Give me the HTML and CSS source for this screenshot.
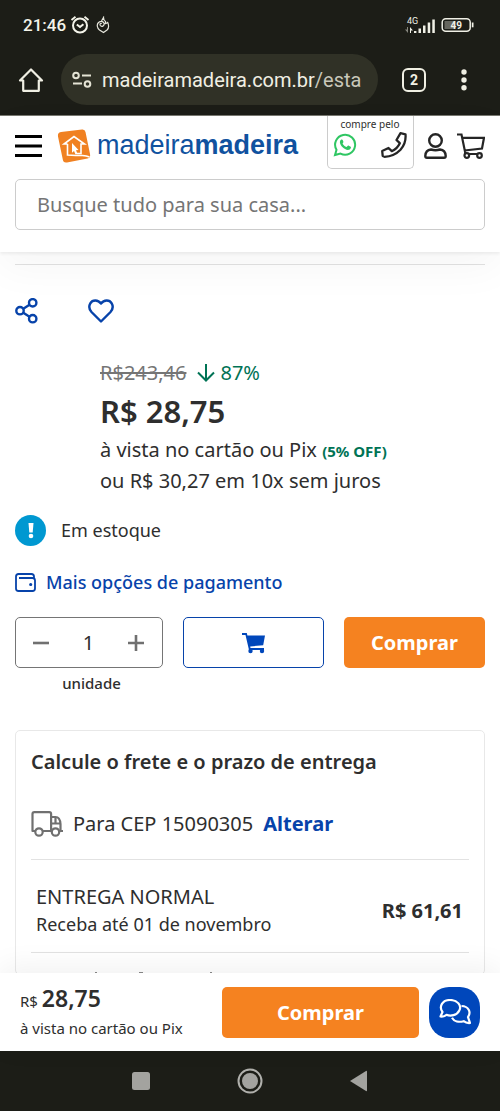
FILE: index.html
```html
<!DOCTYPE html>
<html lang="pt-BR">
<head>
<meta charset="utf-8">
<meta name="viewport" content="width=device-width, initial-scale=1">
<title>MadeiraMadeira</title>
<link rel="stylesheet" href="styles.css">
</head>
<body class="screen">
<div class="chrome">
  <div class="status">
    <div class="status-side">
      <span class="clock">21:46</span>
      <svg width="20" height="20" viewBox="0 0 20 20" fill="none" stroke="#f4f4ea" stroke-width="2"><circle cx="10" cy="10.500" r="7"/><path d="M1.500 5 5.500 1.800M18.500 5l-4-3.200" stroke-width="1.800"/><path d="m6.800 9.500 3.200 2.500 3.400-2.700"/></svg>
      <svg class="flame" width="14" height="18" viewBox="0 0 14 18" fill="none" stroke="#e6e6dc" stroke-width="1.200"><path d="M5.500 5 7.500 1.500c0 2 .5 3 2 4 .2.900 0 1.500-.3 2.200 1-.2 1.800-.7 2.500-1.300C13.300 10 13 12 11 14L7.500 16.500 3.500 14C1 12 .5 8.500 2.500 6.500q3.500-2.500 5.500.5c.8 3-2.500 4.500-3.800 2.300-.6-1.300.3-2.300 1.600-1.800"/></svg>
    </div>
    <div class="status-side">
      <svg width="32" height="18" viewBox="0 0 32 18" fill="#f0f0e6"><text x="2" y="8" class="net">4G</text><path d="M9 15h2.400v2H9zM13.500 12.500H16V17h-2.500zM18 9.500h2.500V17H18zM22.700 6.500h2.500V17h-2.500zM27.300 3.500h2.500V17h-2.500z"/><path d="M5 11l3 3.500H6V17H5z"/><path d="M3 17 0 13.500h2V11h1z" opacity=".5"/></svg>
      <svg width="33" height="16" viewBox="0 0 33 16"><rect x="1.200" y="1.700" width="28" height="12.600" rx="3.500" fill="none" stroke="#f0f0e6" stroke-width="1.500"/><path d="M3.500 4h11v8h-11z" fill="#66665e"/><path d="M30.800 5.500h1.700v4.800h-1.700z" fill="#f0f0e6"/><text x="9.500" y="12" class="bat">49</text></svg>
    </div>
  </div>
  <div class="browser">
    <button class="bare" aria-label="Início"><svg width="26" height="26" viewBox="0 0 26 26" fill="none" stroke="#f0efe3" stroke-width="2.200" stroke-linejoin="round"><path d="M2 13.500 13 2.500l11 11h-3.200v10.300H5.200V13.500z"/></svg></button>
    <div class="url">
      <svg width="20" height="18" viewBox="0 0 20 18" fill="none" stroke="#e4e3d4" stroke-width="2"><circle cx="4" cy="4.500" r="2.800"/><circle cx="15.500" cy="13" r="2.800"/><path d="M10 4.500h9M1 12.500h9"/></svg>
      <span>madeiramadeira.com.br<span class="path">/esta</span></span>
    </div>
    <button class="tabs">2</button>
    <button class="bare dots" aria-label="Mais"><svg width="6" height="22" viewBox="0 0 6 22" fill="#f0efe3"><circle cx="3" cy="3" r="2.700"/><circle cx="3" cy="11" r="2.700"/><circle cx="3" cy="18.700" r="2.700"/></svg></button>
  </div>
</div>

<header class="header">
  <div class="topline">
    <button class="bare" aria-label="Menu"><svg width="27" height="24" viewBox="0 0 27 24" fill="#000"><path d="M0 1h27v3H0zM0 10.500h27v3H0zM0 20h27v3H0z"/></svg></button>
    <a class="logo" href="#">
      <svg width="34" height="34" viewBox="0 0 34 34"><path d="M4 3 25 .5q3-.4 3.500 2.500L33 25q.8 4-2.500 4.500L10 33.500q-3.500.5-4-2L1 7.500Q.3 3.500 4 3Z" fill="#f08122"/><g fill="none" stroke="#fff" stroke-width="1.600"><path d="M10.500 15H7L17 7.500 27.500 15H24v9.500h-4.500M10.500 15v11q9 .5 15 .5 4 .2 7 1.500"/></g><path d="m15 14 6.500 7-2.500.2 1.500 3.500-2 .8-1.500-3.500-2 1.700z" fill="#fff"/></svg>
      <span class="brand">madeira<b>madeira</b></span>
    </a>
    <div class="contact">
      <span>compre pelo</span>
      <div class="contact-icons">
        <a href="#" aria-label="WhatsApp"><svg width="24" height="24" viewBox="0 0 24 24"><path d="M2 22l1.500-5.200A10 10 0 1 1 7.500 20.600z" fill="none" stroke="#2fc663" stroke-width="2"/><path d="M8.300 6.500c.8-.3 1.200 0 1.400.6l.7 1.700c.2.500-.4 1.100-.8 1.600.9 1.800 2.200 3 4 3.700l1.200-1.300c.3-.4.7-.3 1-.1l1.900 1c.4.200.3.500.2 1-.5 1.600-1.600 2.200-3 2.200-3.800-.3-7.600-4.200-8-7.400 0-1.400.6-2.600 1.400-3z" fill="#2fc663"/></svg></a>
        <a href="#" aria-label="Telefone"><svg width="26" height="26" viewBox="0 0 26 26" fill="none" stroke="#252525" stroke-width="2.300" stroke-linejoin="round"><path d="m19.500 1.200 5 1.200q.8 9-5 15.300-6.500 6.700-16 7.100L1.700 24l-.5-5 6.300-3 3.300 3.200q5.500-2.500 8-8L15.500 8z"/></svg></a>
      </div>
    </div>
    <a href="#" aria-label="Conta"><svg width="23" height="26" viewBox="0 0 23 26" fill="none" stroke="#252525" stroke-width="2.400"><circle cx="11.500" cy="7.500" r="6.300"/><path d="M7 16.500q4.500 1.500 9 0 5.500.5 5.700 6.500 0 1.700-1.700 1.700H3q-1.700 0-1.700-1.700.2-6 5.700-6.500z"/></svg></a>
    <a href="#" aria-label="Carrinho"><svg width="28" height="26" viewBox="0 0 28 26" fill="none" stroke="#252525" stroke-width="2.200"><path d="M0 1.500h4.500L8.500 21H25M5.300 4.800H27L25 15.500 7.500 17.500"/><circle cx="9.800" cy="22.500" r="2.300" fill="#fff"/><circle cx="22.500" cy="22.500" r="2.300" fill="#fff"/></svg></a>
  </div>
  <input class="search" type="search" aria-label="Busca" placeholder="Busque tudo para sua casa...">
</header>

<main class="content">
  <hr class="rule">
  <div class="actions">
    <button class="bare" aria-label="Compartilhar"><svg width="24" height="26" viewBox="0 0 24 26" fill="none" stroke="#0743aa" stroke-width="2.400"><circle cx="17.700" cy="4.800" r="3.700"/><circle cx="5" cy="12.700" r="3.700"/><circle cx="17.700" cy="20.700" r="3.700"/><path d="m8.300 10.700 6.200-4M8.300 14.700l6.200 4"/></svg></button>
    <button class="bare" aria-label="Favoritar"><svg width="26" height="24" viewBox="0 0 26 24" fill="none" stroke="#0743aa" stroke-width="2.400" stroke-linejoin="round"><path d="M13 4.500C10 .5 4.500.5 2.300 4.300.5 7.500 1.300 10.500 3.500 13L13 22.500 22.500 13c2.200-2.500 3-5.500 1.200-8.700C21.500.5 16 .5 13 4.500z"/></svg></button>
  </div>
  <section class="price">
    <p class="was"><s>R$243,46</s><svg width="18" height="18" viewBox="0 0 18 18" fill="none" stroke="#007355" stroke-width="2"><path d="M9 0v17M1 8.500l8 8 8-8"/></svg><span>87%</span></p>
    <p class="now">R$ 28,75</p>
    <p class="terms">à vista no cartão ou Pix <b>(5% OFF)</b></p>
    <p class="terms">ou R$ 30,27 em 10x sem juros</p>
  </section>
  <p class="stock"><span class="badge"><svg width="8" height="17" viewBox="0 0 8 17" fill="#fff"><path d="M1.500 1h5l-.8 9.500H2.300z"/><circle cx="4" cy="14" r="2.300"/></svg></span>Em estoque</p>
  <a class="more" href="#"><svg width="21" height="19" viewBox="0 0 21 19" fill="none" stroke="#0743aa" stroke-width="1.800"><path d="M19 5V3.500Q19 1 16.500 1h-13Q1 1 1 3.500v12Q1 18 3.500 18h14q2.500 0 2.500-2.500V7.500Q20 5 17.500 5H4"/><circle cx="15.700" cy="11.500" r=".7" fill="#0743aa"/></svg>Mais opções de pagamento</a>
  <div class="buy">
    <div>
      <div class="qty">
        <button class="bare" aria-label="Diminuir"><svg width="16" height="16" viewBox="0 0 16 16"><path d="M0 6.700h16v2.600H0z" fill="#707070"/></svg></button>
        <input id="qty" type="text" value="1">
        <button class="bare" aria-label="Aumentar"><svg width="16" height="16" viewBox="0 0 16 16"><path d="M0 6.700h16v2.600H0zM6.700 0h2.600v16H6.700z" fill="#707070"/></svg></button>
      </div>
      <label class="unit" for="qty">unidade</label>
    </div>
    <button class="add" aria-label="Adicionar ao carrinho"><svg width="24" height="22" viewBox="0 0 24 22" fill="#0047bb"><path d="M0 1h4.800l.6 2.500H23l-1.800 9.700-13 1.300.3 1.500H22v2H7L3.500 3H0z"/><circle cx="8.500" cy="19" r="2.200"/><circle cx="20" cy="19" r="2.200"/></svg></button>
    <button class="cta">Comprar</button>
  </div>
  <section class="freight">
    <h2>Calcule o frete e o prazo de entrega</h2>
    <p class="cep"><svg width="32" height="26" viewBox="0 0 32 26" fill="none" stroke="#707070" stroke-width="2.200" stroke-linejoin="round"><path d="M4 20H1.500V3Q1.500 1.200 3.300 1.200h15q1.800 0 1.800 1.800v17H12M20 6h4.500Q29 6 29.500 13v7H32M20 12.500h9.500M24.500 6v6.500M20 20h1"/><circle cx="8" cy="21" r="3.700"/><circle cx="24.500" cy="21" r="3.700"/></svg><span>Para CEP 15090305</span><a href="#">Alterar</a></p>
    <div class="option">
      <div><p class="kind">ENTREGA NORMAL</p><p class="eta">Receba até 01 de novembro</p></div>
      <b>R$ 61,61</b>
    </div>
    <svg class="peek" width="120" height="3" viewBox="0 0 120 3" fill="#888" aria-hidden="true"><path d="M0 1h2v1H0zM44 1h4v1h-4zM115 1h2v1h-2z"/></svg>
  </section>
</main>

<footer class="sticky">
  <div class="sum"><p><small>R$</small> <strong>28,75</strong></p><p class="sumterms">à vista no cartão ou Pix</p></div>
  <button class="cta">Comprar</button>
  <button class="chat" aria-label="Chat"><svg width="32" height="26" viewBox="0 0 32 26" fill="none" stroke="#fff" stroke-width="2.200" stroke-linejoin="round"><path d="M1.500 17.500 3.500 13C-.5 7.500 3.500 1 11 1s12 5.500 9.300 10.500C18 16.500 11.500 17.500 7.500 15.800 5.500 17.300 3.500 17.800 1.500 17.500z"/><path d="M22.500 7c7 .2 10 6 6.500 11.200l2 5.800c-2.500.2-4.500-.3-6.300-1.800C20 23.500 15 22.500 13 18.800"/></svg></button>
</footer>
<nav class="system" aria-label="Sistema">
  <button class="bare" aria-label="Recentes"><svg width="20" height="20" viewBox="0 0 20 20"><rect x="1" y="1" width="18" height="18" rx="2.500" fill="#a3a39f"/></svg></button>
  <button class="bare" aria-label="Tela inicial"><svg width="26" height="26" viewBox="0 0 26 26"><circle cx="13" cy="13" r="11.500" fill="none" stroke="#b0b0ac" stroke-width="2"/><circle cx="13" cy="13" r="8" fill="#a3a39f"/></svg></button>
  <button class="bare" aria-label="Voltar"><svg width="20" height="22" viewBox="0 0 20 22"><path d="M1 11 17 1q1-.5 1 .7v18.600q0 1.200-1 .7z" fill="#a3a39f"/></svg></button>
</nav>
</body>
</html>
```
FILE: styles.css
```css
* { box-sizing: border-box; }
p, h2 { margin: 0; }
svg { display: block; flex: none; }
a { color: #0743aa; text-decoration: none; }
button, input { font: inherit; margin: 0; }
.bare { background: none; border: 0; padding: 0; }

.screen {
  margin: 0;
  height: 100vh;
  display: flex;
  flex-direction: column;
  background: #fff;
  color: #2e2e2e;
  font-family: "Noto Sans", "Open Sans", sans-serif;
}

.chrome {
  flex: none;
  background: #1c1d17;
  color: #f4f4ea;
  font-family: Roboto, sans-serif;
  padding-bottom: 10px;
}
.status {
  display: flex;
  justify-content: space-between;
  padding: 14px 26px 6px 23px;
  height: 54px;
}
.status-side { display: flex; align-items: center; gap: 4px; height: 22px; }
.clock { font-size: 17px; font-weight: 500; line-height: 22px; }
.flame { margin-left: 2px; }
.net { font: 9px Roboto, sans-serif; }
.bat { font: bold 10px Roboto, sans-serif; fill: #f0f0e6; }
.browser { display: flex; align-items: center; padding: 0 33px 0 18px; }
.url {
  flex: 1;
  display: flex;
  align-items: center;
  gap: 10px;
  height: 51px;
  margin: 0 24px 0 17px;
  padding-left: 11px;
  border-radius: 26px;
  background: #303126;
  color: #f0efe3;
  font-size: 20px;
  white-space: nowrap;
}
.path { color: #c9c8ba; }
.tabs {
  width: 24px;
  height: 24px;
  padding: 0;
  border: 2px solid #f0efe3;
  border-radius: 6px;
  background: none;
  color: #f0efe3;
  font-size: 14px;
  font-weight: 700;
  line-height: 20px;
}
.dots { margin-left: 35px; }

.header {
  flex: none;
  position: relative;
  z-index: 1;
  background: #fff;
  border-top: 1px solid #77776f;
  padding: 0 15px 22px;
  box-shadow: 0 2px 3px rgba(0, 0, 0, .06), 0 16px 40px rgba(0, 0, 0, .04);
}
.topline { display: flex; align-items: center; height: 59px; }
.logo { display: flex; align-items: center; gap: 6px; margin-left: 15px; }
.brand {
  color: #10529f;
  font-family: "Liberation Sans", Arial, sans-serif;
  font-size: 27px;
  line-height: 32px;
  padding-bottom: 2px;
}
.contact {
  align-self: flex-start;
  width: 87px;
  height: 53px;
  margin: 0 10px 0 auto;
  padding: 1px 6px 0 5px;
  border: 1px solid #ccc;
  border-top: 0;
  border-radius: 0 0 5px 5px;
  font-size: 10px;
  line-height: 15px;
  text-align: center;
}
.contact-icons { display: flex; justify-content: space-between; align-items: center; }
.topline > a + a { margin-left: 10px; }
.search {
  display: block;
  width: 100%;
  height: 51px;
  margin-top: 4px;
  padding: 0 21px;
  border: 1px solid #ccc;
  border-radius: 5px;
  background: #fff;
  color: #2e2e2e;
  font-size: 20px;
  appearance: none;
}
.search::placeholder { color: #757575; opacity: 1; }

.content { flex: 1; min-height: 0; overflow: hidden; padding: 12px 15px 0; }
.rule { margin: 0; border: 0; border-top: 1px solid #e2e2e2; }
.actions { display: flex; align-items: center; gap: 49px; margin-top: 33px; }
.price { margin: 34px 0 0 85px; }
.was { display: flex; align-items: center; color: #007355; font-size: 20px; line-height: 30px; }
.was s { color: #757575; }
.was svg { margin: 0 5px 0 11px; }
.now { font-size: 31px; font-weight: 600; line-height: 46px; }
.terms { font-size: 20px; line-height: 31px; white-space: nowrap; }
.terms b { color: #007355; font-size: 15px; line-height: 20px; }
.stock { display: flex; align-items: center; gap: 15px; margin-top: 19px; font-size: 18px; line-height: 31px; }
.badge {
  display: flex;
  align-items: center;
  justify-content: center;
  width: 31px;
  height: 31px;
  border-radius: 50%;
  background: #0098d1;
}
.more { display: flex; align-items: center; gap: 10px; margin-top: 22px; font-size: 18px; font-weight: 500; line-height: 28px; }
.buy { display: grid; grid-template-columns: 148fr 141fr 141fr; gap: 20px; margin-top: 21px; }
.qty {
  display: flex;
  align-items: center;
  justify-content: space-between;
  height: 51px;
  padding: 0 18px 0 17px;
  border: 1px solid #757575;
  border-radius: 5px;
}
.qty input { width: 32px; border: 0; padding: 0; background: none; color: #2e2e2e; font-size: 20px; text-align: center; }
.unit { display: block; margin-top: 4px; padding-left: 5px; font-size: 15px; font-weight: 500; line-height: 22px; text-align: center; }
.add {
  display: flex;
  align-items: center;
  justify-content: center;
  height: 51px;
  border: 1px solid #0743aa;
  border-radius: 5px;
  background: #fff;
}
.cta { height: 51px; padding: 0; border: 0; border-radius: 5px; background: #f58220; color: #fff; font-size: 20px; font-weight: 700; }
.freight { margin-top: 36px; padding: 16px 15px 0; border: 1px solid #e8e8e8; border-radius: 5px; }
.freight h2 { font-size: 20px; font-weight: 600; line-height: 30px; }
.cep { display: flex; align-items: center; gap: 10px; margin-top: 32px; padding-bottom: 20px; border-bottom: 1px solid #e2e2e2; font-size: 20px; line-height: 30px; }
.cep a { font-weight: 700; }
.option { display: flex; align-items: center; justify-content: space-between; padding: 22px 6px 14px 5px; border-bottom: 1px solid #e2e2e2; font-size: 20px; }
.kind { font-size: 20px; line-height: 29px; }
.eta { font-size: 18px; line-height: 27px; }
.peek { margin: 18px 0 0 64px; }

.sticky {
  flex: none;
  position: relative;
  z-index: 1;
  display: grid;
  grid-template-columns: 1fr minmax(0, 197px) 51px;
  align-items: center;
  column-gap: 10px;
  height: 78px;
  padding: 0 20px;
  background: #fff;
  box-shadow: 0 -6px 30px rgba(0, 0, 0, .06);
}
.sum { padding-top: 3px; font-size: 15px; line-height: 27px; white-space: nowrap; }
.sum small { font-size: 15px; }
.sum strong { font-size: 23px; font-weight: 600; }
.chat {
  display: flex;
  align-items: center;
  justify-content: center;
  width: 51px;
  height: 51px;
  padding: 0;
  border: 0;
  border-radius: 20px;
  background: #0047bb;
}
.system {
  flex: none;
  display: flex;
  align-items: center;
  justify-content: center;
  gap: 86px;
  height: 60px;
  background: #1c1d17;
}
```
